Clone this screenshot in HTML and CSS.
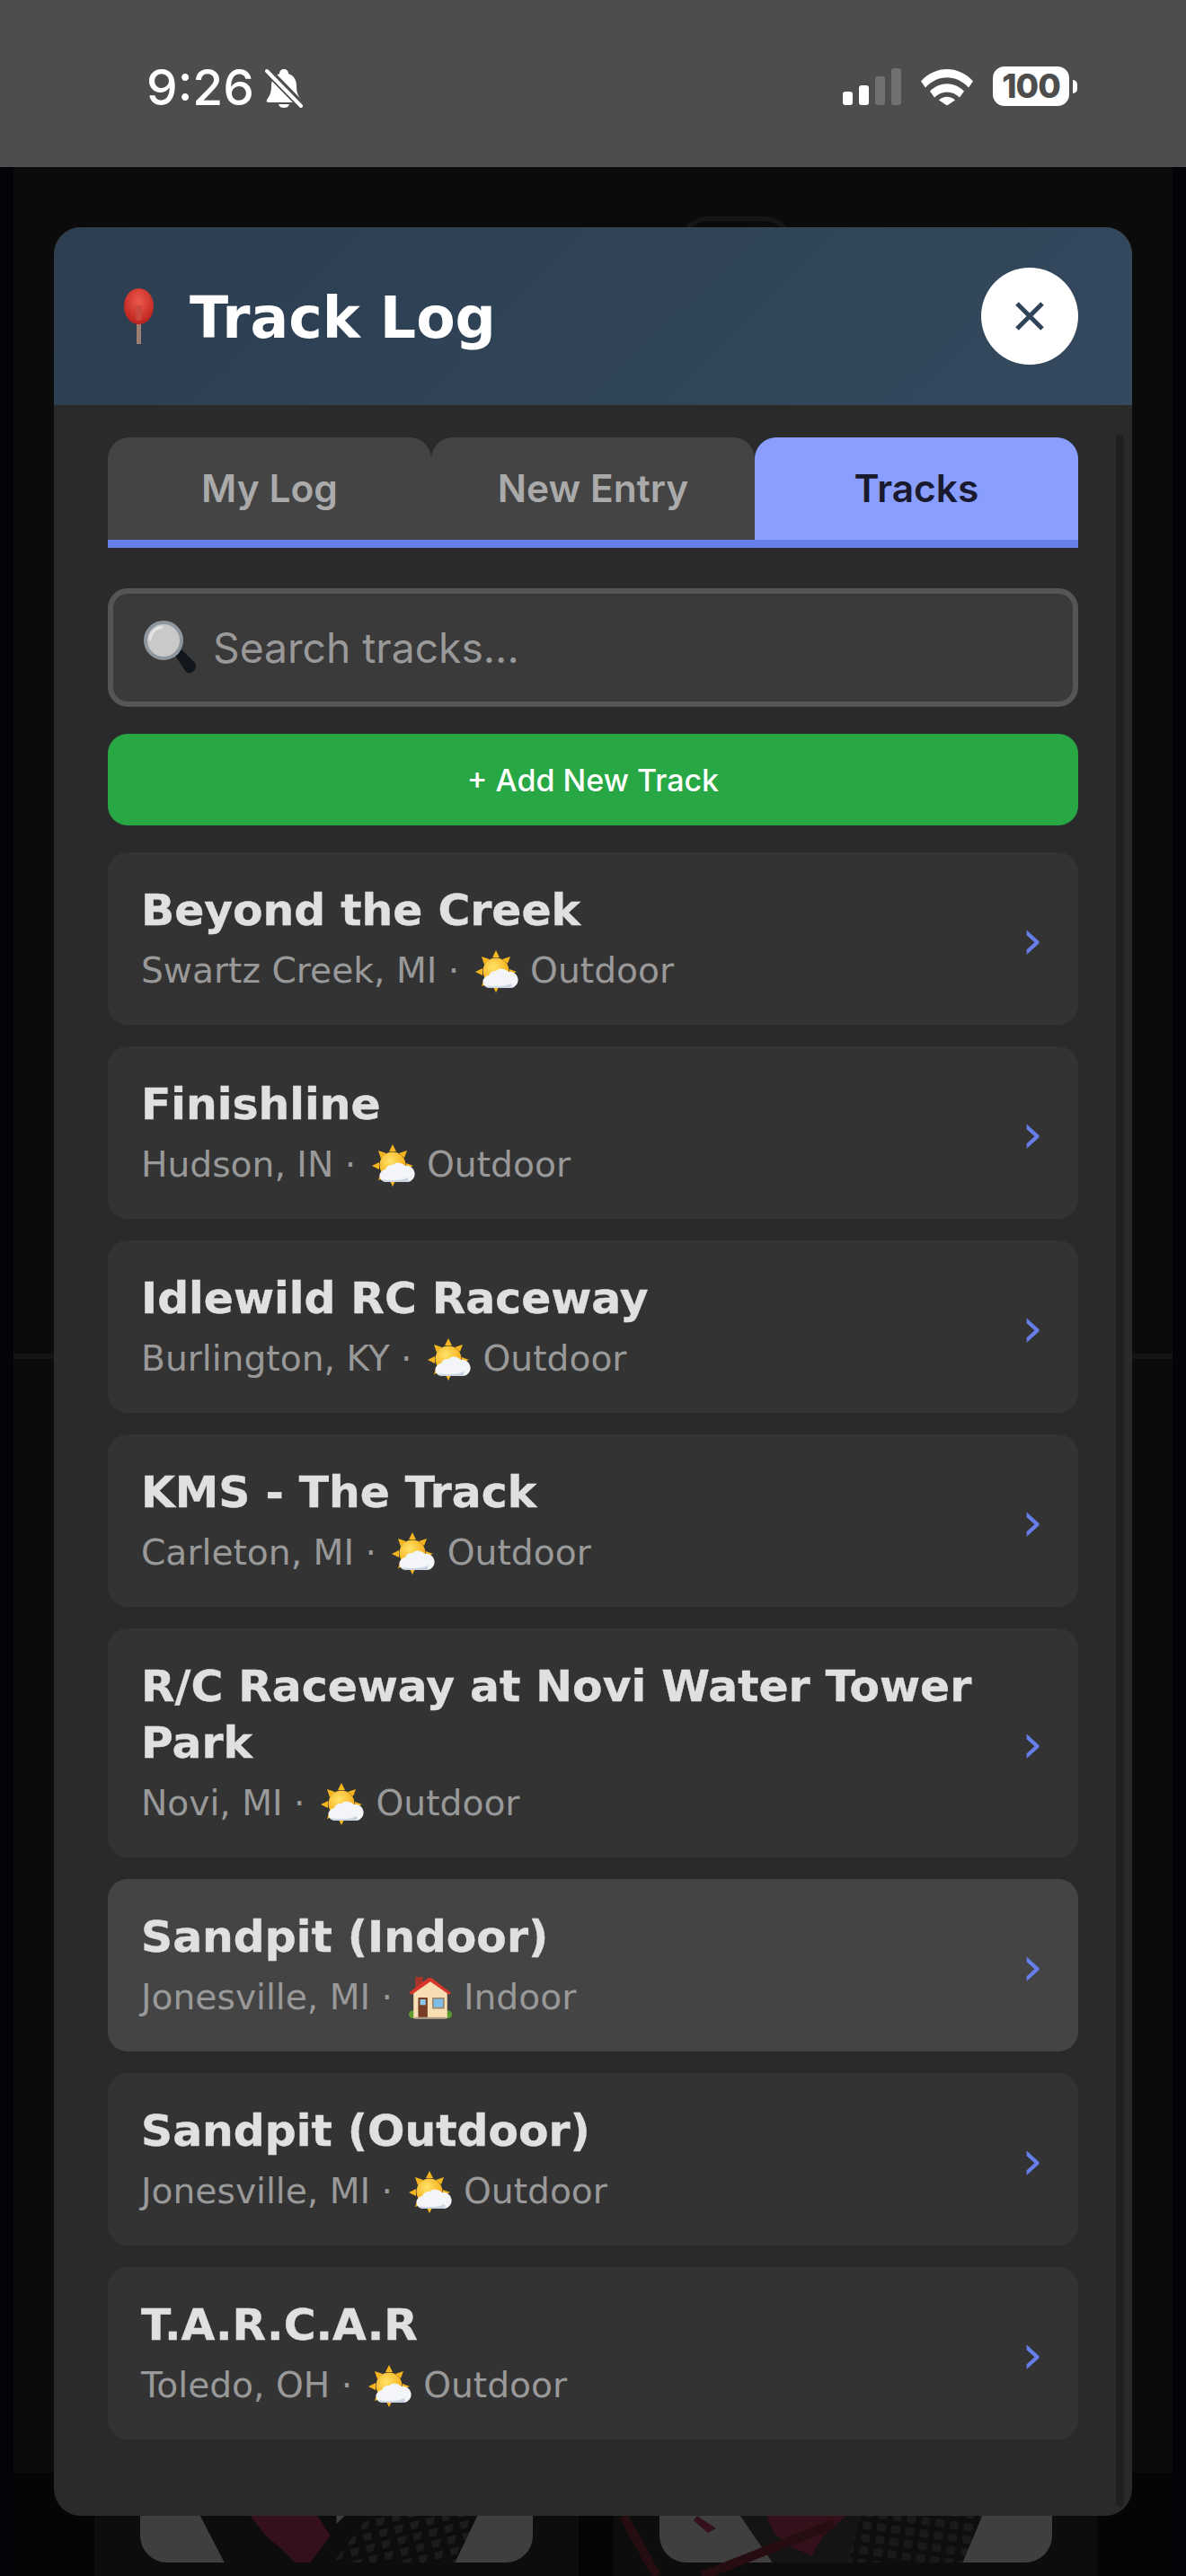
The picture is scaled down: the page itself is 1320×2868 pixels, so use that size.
FILE: index.html
```html
<!DOCTYPE html>
<html lang="en">
<head>
    <meta charset="UTF-8">
    <meta name="viewport" content="width=device-width, initial-scale=1.0">
    <title>Track Log</title>
    <link rel="stylesheet" href="styles.css">
</head>
<body>

<!-- shared emoji drawings -->
<svg class="defs" width="0" height="0">
    <defs>
        <radialGradient id="sunFill" cx="0.4" cy="0.35" r="0.7">
            <stop offset="0" stop-color="#ffe36a"/>
            <stop offset="1" stop-color="#f7a80f"/>
        </radialGradient>
        <radialGradient id="pinFill" cx="0.5" cy="0.35" r="0.7">
            <stop offset="0" stop-color="#ee5a4e"/>
            <stop offset="1" stop-color="#b51c17"/>
        </radialGradient>
        <symbol id="sun" viewBox="0 0 48 48">
            <g fill="#f5b51e">
                <path d="M23 0l4 8h-8z"/>
                <path d="M7 7l9 3-6 6z"/>
                <path d="M39 7l-3 8-6-5z"/>
                <path d="M0 24l8-4v8z"/>
                <path d="M46 24l-8-3v6z"/>
                <path d="M7 40l3-9 6 6z"/>
                <path d="M23 47l-4-8h8z"/>
            </g>
            <circle cx="23" cy="23" r="14.5" fill="url(#sunFill)"/>
            <path d="M16 42a7 7 0 0 1-1-14 8 8 0 0 1 8-5 10 10 0 0 1 14 1 9 9 0 0 1 3 18z" fill="#f4f5f8"/>
            <path d="M16 42a7 7 0 0 1-5-3c8 2 22 2 29-2a7 7 0 0 1 0 5z" fill="#c9d3e2"/>
        </symbol>
        <symbol id="house" viewBox="0 0 46 46">
            <circle cx="4" cy="40" r="4" fill="#5d9a2e"/>
            <circle cx="42" cy="40" r="4" fill="#5d9a2e"/>
            <path d="M7 0h8v12l-8 6z" fill="#a5352b"/>
            <path d="M5 17L23 3l18 14v27H5z" fill="#f7dfb3"/>
            <path d="M0 17L21 1h3l21 16-2 2L23 5 3 19z" fill="#d9362b"/>
            <rect x="10" y="22" width="10" height="21" fill="#7a3b26"/>
            <rect x="12" y="24" width="6" height="6" fill="#8cc6e8"/>
            <rect x="25" y="22" width="13" height="12" fill="#9a8468"/>
            <rect x="26.500" y="23.500" width="10" height="9" fill="#7fbde6"/>
            <rect x="6" y="43" width="34" height="2" fill="#a89a86"/>
        </symbol>
    </defs>
</svg>

<div class="status-bar">
    <div class="status-left">
        <span class="clock">9:26</span>
        <svg class="bell" viewBox="0 0 42 44">
            <path d="M21 1c3 0 5 2 5 5 6 2 9 7 9 14 0 7 2 11 5 15 1 2 0 3-2 3H4c-2 0-3-1-2-3 3-4 5-8 5-15 0-7 3-12 9-14 0-3 2-5 5-5z" fill="#fff"/>
            <path d="M15 40h12c-1 3-3 4-6 4s-5-1-6-4z" fill="#fff"/>
            <path d="M0 0l42 43" stroke="#4d4d4d" stroke-width="9"/>
            <path d="M2 3l38 39" stroke="#fff" stroke-width="4" stroke-linecap="round"/>
        </svg>
    </div>
    <div class="status-right">
        <div class="signal">
            <i class="bar bar-1"></i>
            <i class="bar bar-2"></i>
            <i class="bar bar-3"></i>
            <i class="bar bar-4"></i>
        </div>
        <svg class="wifi" viewBox="0 0 58 42">
            <path d="M0 15C16-3 42-3 58 15l-5 7C39 7 19 7 5 22z" fill="#fff"/>
            <path d="M10 26c11-11 27-11 38 0l-5 7c-8-8-20-8-28 0z" fill="#fff"/>
            <path d="M20 36c5-5 13-5 18 0l-9 6z" fill="#fff"/>
        </svg>
        <div class="battery">
            <span class="battery-level">100</span>
            <i class="battery-tip"></i>
        </div>
    </div>
</div>

<div class="stage">
    <!-- page behind the modal -->
    <div class="backdrop">
        <div class="ghost-button"></div>
        <div class="divider"></div>
        <div class="product-grid">
            <div class="product-card">
                <div class="product-image">
                    <svg class="tire" viewBox="0 0 438 52">
                        <defs>
                            <pattern id="tread" width="18" height="13" patternUnits="userSpaceOnUse" patternTransform="rotate(-14)">
                                <rect width="18" height="13" fill="#0d0d0d"/>
                                <path d="M2 2h11l-4 8H2z" fill="#1c1c1c"/>
                            </pattern>
                        </defs>
                        <path d="M67 0L94 52H351L376 0z" fill="#0d0d0d"/>
                        <path d="M255 0L215 52H351L376 0z" fill="url(#tread)"/>
                        <path d="M123 0H198L212 22 201 37 190 52H173L158 37 140 22z" fill="#33101a"/>
                        <path d="M219 0h9l-9 9z" fill="#3f3f3f"/>
                    </svg>
                </div>
            </div>
            <div class="product-card">
                <div class="product-image">
                    <svg class="tire" viewBox="0 0 438 52">
                        <defs>
                            <pattern id="treadTwo" width="16" height="14" patternUnits="userSpaceOnUse" patternTransform="rotate(8)">
                                <rect width="16" height="14" fill="#0e0e0e"/>
                                <rect x="2" y="2" width="10" height="9" rx="3" fill="#1a1a1a"/>
                            </pattern>
                        </defs>
                        <path d="M90 0L126 52H338L360 0z" fill="#141414"/>
                        <path d="M225 0L210 52H338L360 0z" fill="url(#treadTwo)"/>
                        <path d="M119 0H208L183 22 170 44 150 36 128 20z" fill="#33101a"/>
                        <path d="M42 0l21 14-9 5-16-14z" fill="#33101a"/>
                    </svg>
                </div>
                <svg class="stripes" viewBox="0 0 539 67">
                    <path d="M11 0L48 67" stroke="#260d11" stroke-width="10"/>
                    <path d="M98 67L245 9" stroke="#260d11" stroke-width="10"/>
                </svg>
            </div>
        </div>
    </div>

    <div class="modal">
        <div class="modal-header">
            <h2 class="modal-title">
                <svg class="pin" viewBox="0 0 33 62">
                    <rect x="14" y="30" width="5" height="32" fill="#9c7f70"/>
                    <ellipse cx="16.500" cy="20" rx="16.500" ry="20" fill="url(#pinFill)"/>
                    <rect x="13" y="19" width="7" height="17" rx="3" fill="#c9473f"/>
                </svg>
                Track Log
            </h2>
            <button class="close-btn">
                <svg viewBox="0 0 34 34" width="34" height="34">
                    <path d="M3 3l28 28M31 3L3 31" stroke="#2f4358" stroke-width="5"/>
                </svg>
            </button>
        </div>

        <div class="modal-body">
            <div class="tabs">
                <div class="tab">My Log</div>
                <div class="tab">New Entry</div>
                <div class="tab active">Tracks</div>
            </div>

            <div class="search-box">
                <svg class="search-icon" viewBox="0 0 59 60">
                    <path d="M36 39l7-7 15 15c2 3 1 6-1 9-3 3-6 3-9 1z" fill="#10161c"/>
                    <path d="M28 33l5-5 8 7-6 6z" fill="#6e7680"/>
                    <circle cx="23" cy="22" r="20" fill="#c9c9c9" stroke="#8e97a0" stroke-width="4"/>
                    <path d="M8 22a15 15 0 0 1 14-15" fill="none" stroke="#e4e4e4" stroke-width="3"/>
                </svg>
                <span class="search-placeholder">Search tracks...</span>
            </div>

            <button class="add-btn">+ Add New Track</button>

            <div class="track-list">
                <div class="track">
                    <div class="track-info">
                        <div class="track-name">Beyond the Creek</div>
                        <div class="track-meta">Swartz Creek, MI · <svg class="emoji"><use href="#sun"/></svg> Outdoor</div>
                    </div>
                    <span class="track-arrow">›</span>
                </div>
                <div class="track">
                    <div class="track-info">
                        <div class="track-name">Finishline</div>
                        <div class="track-meta">Hudson, IN · <svg class="emoji"><use href="#sun"/></svg> Outdoor</div>
                    </div>
                    <span class="track-arrow">›</span>
                </div>
                <div class="track">
                    <div class="track-info">
                        <div class="track-name">Idlewild RC Raceway</div>
                        <div class="track-meta">Burlington, KY · <svg class="emoji"><use href="#sun"/></svg> Outdoor</div>
                    </div>
                    <span class="track-arrow">›</span>
                </div>
                <div class="track">
                    <div class="track-info">
                        <div class="track-name">KMS - The Track</div>
                        <div class="track-meta">Carleton, MI · <svg class="emoji"><use href="#sun"/></svg> Outdoor</div>
                    </div>
                    <span class="track-arrow">›</span>
                </div>
                <div class="track">
                    <div class="track-info">
                        <div class="track-name">R/C Raceway at Novi Water Tower Park</div>
                        <div class="track-meta">Novi, MI · <svg class="emoji"><use href="#sun"/></svg> Outdoor</div>
                    </div>
                    <span class="track-arrow">›</span>
                </div>
                <div class="track selected">
                    <div class="track-info">
                        <div class="track-name">Sandpit (Indoor)</div>
                        <div class="track-meta">Jonesville, MI · <svg class="emoji"><use href="#house"/></svg> Indoor</div>
                    </div>
                    <span class="track-arrow">›</span>
                </div>
                <div class="track">
                    <div class="track-info">
                        <div class="track-name">Sandpit (Outdoor)</div>
                        <div class="track-meta">Jonesville, MI · <svg class="emoji"><use href="#sun"/></svg> Outdoor</div>
                    </div>
                    <span class="track-arrow">›</span>
                </div>
                <div class="track">
                    <div class="track-info">
                        <div class="track-name">T.A.R.C.A.R</div>
                        <div class="track-meta">Toledo, OH · <svg class="emoji"><use href="#sun"/></svg> Outdoor</div>
                    </div>
                    <span class="track-arrow">›</span>
                </div>
            </div>
        </div>

        <div class="scrollbar"></div>
    </div>
</div>

</body>
</html>
```

FILE: styles.css
```css
* {
    box-sizing: border-box;
}
html, body {
    margin: 0;
    height: 100%;
}
body {
    width: 1320px;
    height: 2868px;
    overflow: hidden;
    display: flex;
    flex-direction: column;
    font-family: Inter, "Liberation Sans", sans-serif;
    background-color: #03030a;
    color: white;
}
.defs {
    position: absolute;
}

/* status bar */
.status-bar {
    height: 186px;
    flex-shrink: 0;
    background-color: #4d4d4d;
    display: flex;
    justify-content: space-between;
    padding: 74px 130px 0 163px;
}
.status-left {
    display: flex;
    align-items: flex-start;
    gap: 12px;
}
.clock {
    font-size: 55px;
    font-weight: 500;
    line-height: 46px;
}
.bell {
    width: 42px;
    height: 44px;
    margin-top: 2px;
}
.status-right {
    display: flex;
    align-items: flex-start;
}
.signal {
    display: flex;
    align-items: flex-end;
    gap: 7px;
    height: 43px;
    margin-right: 22px;
}
.bar {
    width: 11px;
    border-radius: 3px;
    background-color: white;
}
.bar-1 { height: 15px; }
.bar-2 { height: 22px; }
.bar-3 { height: 32px; background-color: #707070; }
.bar-4 { height: 41px; background-color: #707070; }
.wifi {
    width: 58px;
    height: 43px;
    margin: 1px 22px 0 0;
}
.battery {
    position: relative;
    width: 85px;
    height: 44px;
    border-radius: 13px;
    background-color: white;
    color: #4d4d4d;
    font-size: 37px;
    font-weight: 800;
    line-height: 44px;
    text-align: center;
    letter-spacing: -1px;
}
.battery-tip {
    position: absolute;
    right: -9px;
    top: 15px;
    width: 5px;
    height: 15px;
    border-radius: 0 5px 5px 0;
    background-color: white;
}

/* page behind the modal */
.stage {
    position: relative;
    flex: 1;
}
.backdrop {
    height: 100%;
    margin: 0 15px;
    background-color: #0b0b0b;
    display: flex;
    flex-direction: column;
}
.ghost-button {
    width: 124px;
    height: 60px;
    margin: 55px 0 0 742px;
    border: 5px solid #161616;
    border-bottom: none;
    border-radius: 30px 30px 0 0;
}
.divider {
    height: 6px;
    margin-top: 1206px;
    background-color: #141414;
}
.product-grid {
    margin-top: auto;
    padding: 0 83px 0 90px;
    display: grid;
    grid-template-columns: 539px 539px;
    column-gap: 39px;
    background-color: #050505;
}
.product-card {
    position: relative;
    padding: 0 51px 15px;
    background-color: #0d0d0d;
}
.product-image {
    height: 100px;
    display: flex;
    align-items: flex-end;
    overflow: hidden;
    background-color: #3f3f3f;
    border-radius: 0 0 30px 30px;
}
.tire {
    width: 438px;
    height: 52px;
    display: block;
}
.stripes {
    position: absolute;
    left: 0;
    bottom: 0;
    width: 539px;
    height: 67px;
}

/* modal */
.modal {
    position: absolute;
    top: 67px;
    left: 60px;
    width: 1200px;
    height: 2548px;
    border-radius: 30px;
    overflow: hidden;
    background-color: #2a2a2a;
}
.modal-header {
    height: 198px;
    padding: 0 60px 0 60px;
    background: linear-gradient(135deg, #2c3e50, #34495e);
    display: flex;
    align-items: center;
    justify-content: space-between;
}
.modal-title {
    margin: 0;
    padding: 4px 0 0 18px;
    font-family: "DejaVu Sans", sans-serif;
    font-size: 63.3px;
    font-weight: bold;
    display: flex;
    align-items: center;
    gap: 40px;
}
.pin {
    width: 33px;
    height: 62px;
    margin-top: -4px;
}
.close-btn {
    width: 108px;
    height: 108px;
    padding: 0;
    border: none;
    border-radius: 50%;
    background-color: white;
    display: flex;
    align-items: center;
    justify-content: center;
    cursor: pointer;
}
.modal-body {
    padding: 36px 60px 0;
}

/* tabs */
.tabs {
    display: grid;
    grid-template-columns: repeat(3, 1fr);
    border-bottom: 9px solid #667eea;
}
.tab {
    height: 114px;
    line-height: 114px;
    text-align: center;
    font-size: 42.5px;
    font-weight: 600;
    color: #aaa;
    background-color: #444;
    border-radius: 24px 24px 0 0;
}
.tab.active {
    background-color: #8a9eff;
    color: #1a1a2e;
}

/* search + add */
.search-box {
    height: 132px;
    margin-top: 45px;
    padding-left: 33px;
    border: 6px solid #555;
    border-radius: 22px;
    background-color: #3a3a3a;
    display: flex;
    align-items: center;
    gap: 19px;
}
.search-icon {
    width: 59px;
    height: 60px;
}
.search-placeholder {
    font-size: 46.2px;
    color: #999;
}
.add-btn {
    display: block;
    width: 100%;
    height: 102px;
    margin-top: 30px;
    border: none;
    border-radius: 22px;
    background-color: #28a745;
    color: white;
    font-family: inherit;
    font-size: 34px;
    font-weight: 500;
    cursor: pointer;
}

/* track list */
.track-list {
    margin-top: 30px;
    display: flex;
    flex-direction: column;
    gap: 24px;
}
.track {
    padding: 33px 39px 35px 37px;
    border-radius: 22px;
    background-color: #333;
    display: flex;
    align-items: center;
    justify-content: space-between;
}
.track.selected {
    background-color: #444;
}
.track-info {
    width: 960px;
}
.track-name {
    font-family: "DejaVu Sans", sans-serif;
    font-size: 48.8px;
    font-weight: bold;
    line-height: 63px;
    color: #e0e0e0;
    -webkit-text-stroke: 0.4px #e0e0e0;
}
.track-meta {
    margin-top: 10px;
    font-family: "DejaVu Sans", sans-serif;
    font-size: 39.2px;
    line-height: 51px;
    color: #999;
    white-space: nowrap;
}
.emoji {
    width: 48px;
    height: 48px;
    margin: 0 1px 0 5px;
    vertical-align: -12px;
}
.track-arrow {
    padding-top: 4px;
    font-family: "DejaVu Sans", sans-serif;
    font-size: 60px;
    line-height: 63px;
    color: #667eea;
}
.scrollbar {
    position: absolute;
    top: 231px;
    right: 9px;
    width: 9px;
    height: 2307px;
    border-radius: 5px;
    background-color: #1f1f1f;
}
```
